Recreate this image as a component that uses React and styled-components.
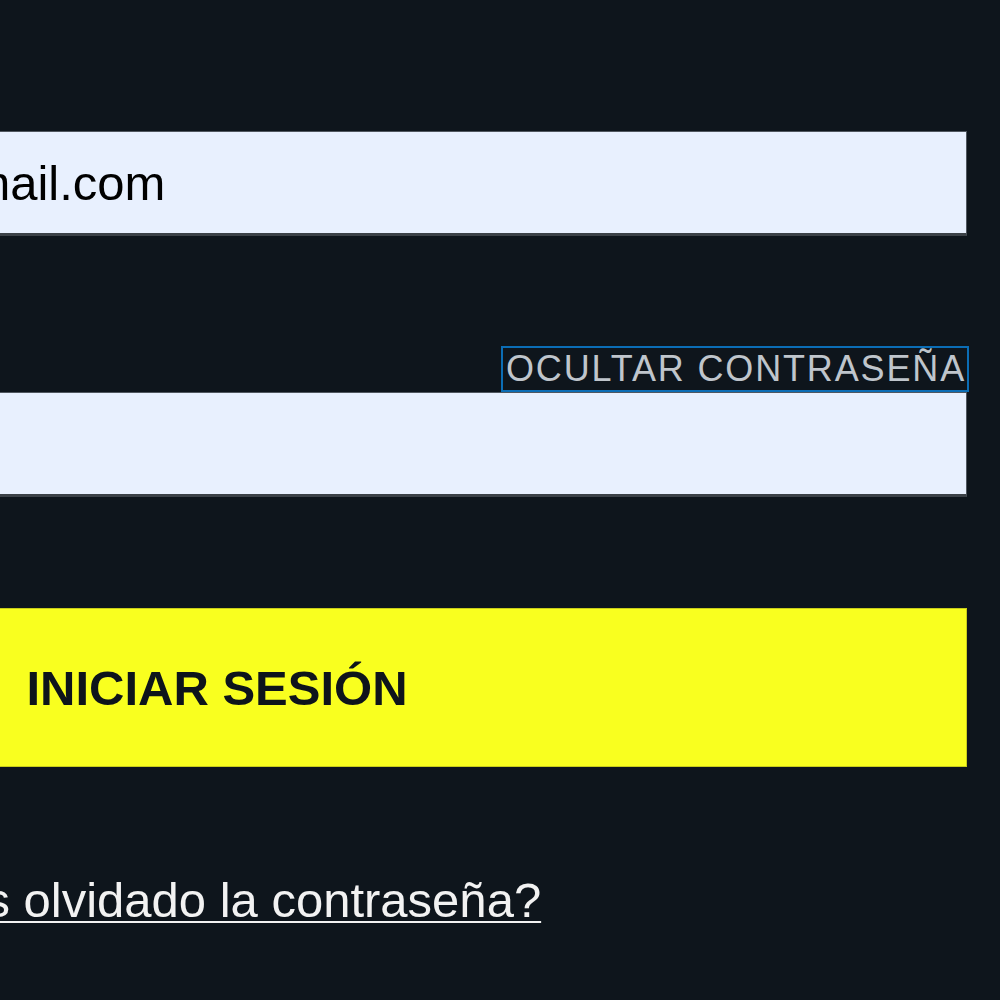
import React, { useState } from 'react'
import styled, { createGlobalStyle } from 'styled-components'

const GlobalStyle = createGlobalStyle`
html, body {
    margin: 0;
    padding: 0;
    overflow: hidden;
    background: #0e151c;
    font-family: "Liberation Sans", Arial, sans-serif;
}
`

const Page = styled.div`
display: flex;
justify-content: flex-end;
padding: 85px 33px 0 0;
min-height: 1000px;
box-sizing: border-box;
`

const Form = styled.form`
display: flex;
flex-direction: column;
flex: 0 0 1500px;
width: 1500px;
`

const Field = styled.div`
display: flex;
flex-direction: column;
margin-bottom: ${p => p.$gap || 0}px;
`

const LabelRow = styled.div`
display: flex;
justify-content: space-between;
align-items: flex-start;
height: 46px;
`

const Label = styled.label`
font-size: 36px;
line-height: 42px;
margin-top: 2px;
color: #bfc5cc;
`

const Toggle = styled.button`
height: 42px;
margin-top: 2px;
padding: 0 1px 0 3px;
border: none;
background: transparent;
color: #bfc5cc;
font-family: "Liberation Sans", Arial, sans-serif;
font-size: 36px;
line-height: 42px;
letter-spacing: 1.85px;
outline: 2px solid #0b6db5;
cursor: pointer;
`

const Input = styled.input`
box-sizing: border-box;
height: 105px;
width: 100%;
padding: 0 24px;
border: 1px solid #50575f;
border-bottom: 3px solid #3b4147;
background: #e8f0fe;
color: #000;
font-family: "Liberation Sans", Arial, sans-serif;
font-size: 49px;
outline: none;
`

const Submit = styled.button`
height: 159px;
border: 1px solid #c8cd1a;
background: #f9ff1f;
color: #0e141b;
font-family: "Liberation Sans", Arial, sans-serif;
font-size: 49px;
font-weight: bold;
cursor: pointer;
margin-bottom: 105px;
`

const Forgot = styled.a`
align-self: center;
font-size: 49px;
color: #f2f2f2;
text-decoration: underline;
text-decoration-thickness: 2px;
text-underline-offset: 4px;
`

export default function App() {
    const [show, setShow] = useState(true)
    const [email, setEmail] = useState('usuario.ejemplo12@gmail.com')
    const [password, setPassword] = useState('')

    return (
        <>
            <GlobalStyle />
            <Page>
                <Form onSubmit={e => e.preventDefault()}>
                    <Field $gap={110}>
                        <LabelRow>
                            <Label htmlFor="email">Correo electrónico</Label>
                        </LabelRow>
                        <Input id="email" type="email" value={email} onChange={e => setEmail(e.target.value)} />
                    </Field>
                    <Field $gap={111}>
                        <LabelRow>
                            <Label htmlFor="password">Contraseña</Label>
                            <Toggle type="button" onClick={() => setShow(!show)}>
                                {show ? 'OCULTAR CONTRASEÑA' : 'MOSTRAR CONTRASEÑA'}
                            </Toggle>
                        </LabelRow>
                        <Input id="password" type={show ? 'text' : 'password'} value={password} onChange={e => setPassword(e.target.value)} />
                    </Field>
                    <Submit type="submit">INICIAR SESIÓN</Submit>
                    <Forgot href="#">¿Has olvidado la contraseña?</Forgot>
                </Form>
            </Page>
        </>
    )
}
